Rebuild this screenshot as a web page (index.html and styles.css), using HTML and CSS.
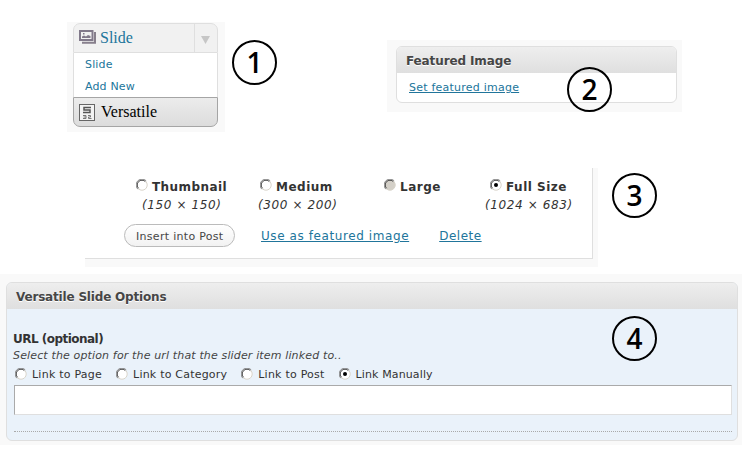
FILE: index.html
```
<!DOCTYPE html>
<html lang="en">
<head>
<meta charset="utf-8">
<title>Versatile slide guide</title>
<link rel="stylesheet" href="styles.css">
</head>
<body>
<svg class="defs" aria-hidden="true">
  <symbol id="ring" viewBox="0 0 12 12">
    <path d="M1.8 10.2A5.4 5.4 0 0 1 10.2 1.8" fill="none" stroke="#888"/>
    <path d="M2.6 9.4A4.6 4.6 0 0 1 9.4 2.6" fill="none" stroke="#404040"/>
    <path d="M9.7 2.3A5 5 0 0 1 2.3 9.7" fill="none" stroke="#d8d4ca"/>
  </symbol>
  <symbol id="radio" viewBox="0 0 12 12"><circle cx="6" cy="6" r="5.3" fill="#fff"/><use href="#ring"/></symbol>
  <symbol id="radio-off" viewBox="0 0 12 12"><circle cx="6" cy="6" r="5.3" fill="#d4d0c8"/><use href="#ring"/></symbol>
  <symbol id="radio-on" viewBox="0 0 12 12"><circle cx="6" cy="6" r="5.3" fill="#fff"/><use href="#ring"/><circle cx="6" cy="6" r="2" fill="#000"/></symbol>
</svg>
<main class="page">
  <section class="top">
    <div class="shot shot-menu">
      <nav class="menu">
        <div class="menu-head">
          <svg class="ico-slide" width="18" height="16" viewBox="0 0 18 16"><path d="M3 12.800H16V2" fill="none" stroke="#877f8c" stroke-width="2"/><rect x="0" y="0" width="14.500" height="11" fill="#81798a"/><rect x="2" y="2" width="10.500" height="7" fill="#f1f1f1"/><path d="M3 8V6.500l2-1 2 1 2-1.500 2.500 1V8z" fill="#81798a"/><rect x="4" y="3" width="1.500" height="1.500" fill="#81798a"/></svg>
          <a class="serif t-slide">Slide</a>
          <span class="toggle"><svg width="9" height="8" viewBox="0 0 9 8"><path d="M0 0H9L4.500 8z" fill="#c6c6c6"/></svg></span>
        </div>
        <div class="menu-list"><a class="t-sub1">Slide</a><a class="t-sub2">Add New</a></div>
        <div class="menu-foot">
          <svg class="ico-vers" width="16" height="17" viewBox="0 0 16 17"><rect x=".5" y=".5" width="15" height="16" fill="#f3f3f3" stroke="#666"/><path d="M12 3.500H5V6H11V8.500H4" fill="none" stroke="#555" stroke-width="1.500"/><path d="M4 11.500H7V14.500H4M4.500 13H7M9 11.500H11.500V13H9.500V14.500H12.500" fill="none" stroke="#777"/></svg>
          <span class="serif t-vers">Versatile</span>
        </div>
      </nav>
    </div>
    <b class="num num-1">1</b>
    <div class="shot shot-feat">
      <div class="box">
        <h3 class="box-title"><span class="t-feat">Featured Image</span></h3>
        <div class="feat-body"><a class="link t-set">Set featured image</a></div>
      </div>
      <b class="num num-2">2</b>
    </div>
  </section>
  <section class="middle">
    <div class="shot shot-sizes">
      <div class="sizes">
        <div class="size-row">
          <div class="size"><label><svg class="radio"><use href="#radio"/></svg><strong class="t-thumb">Thumbnail</strong></label><em class="t-d1">(150 × 150)</em></div>
          <div class="size"><label><svg class="radio"><use href="#radio"/></svg><strong class="t-med">Medium</strong></label><em class="t-d2">(300 × 200)</em></div>
          <div class="size"><label><svg class="radio"><use href="#radio-off"/></svg><strong class="t-large">Large</strong></label></div>
          <div class="size size-full"><label><svg class="radio"><use href="#radio-on"/></svg><strong class="t-full">Full Size</strong></label><em class="t-d3">(1024 × 683)</em></div>
        </div>
        <div class="actions"><span class="button"><span class="t-insert">Insert into Post</span></span><a class="link t-use">Use as featured image</a><a class="link t-del">Delete</a></div>
      </div>
    </div>
    <b class="num num-3">3</b>
  </section>
  <section class="shot shot-options">
    <div class="box box-blue">
      <h3 class="box-title"><span class="t-opt">Versatile Slide Options</span></h3>
      <div class="opt-body">
        <h4><span class="t-url">URL (optional)</span></h4>
        <p><em class="t-sel">Select the option for the url that the slider item linked to..</em></p>
        <div class="choices">
          <label><svg class="radio"><use href="#radio"/></svg><span class="t-l1">Link to Page</span></label>
          <label><svg class="radio"><use href="#radio"/></svg><span class="t-l2">Link to Category</span></label>
          <label><svg class="radio"><use href="#radio"/></svg><span class="t-l3">Link to Post</span></label>
          <label><svg class="radio"><use href="#radio-on"/></svg><span class="t-l4">Link Manually</span></label>
        </div>
        <div class="field"></div>
        <div class="rule"></div>
      </div>
    </div>
    <b class="num num-4">4</b>
  </section>
</main>
</body>
</html>
```
FILE: styles.css
```
* { box-sizing: border-box; }
body { margin: 0; background: #fff; color: #333; font: 11px/14px "DejaVu Sans", Verdana, sans-serif; }
h3, h4, p { margin: 0; }
a { color: #21759b; }
.defs { position: absolute; width: 0; height: 0; }
.page { width: 745px; height: 450px; overflow: hidden; }
.shot { background: #f9f9f9; }
.link { text-decoration: underline; }
.serif { font-family: "Liberation Serif", Georgia, serif; font-size: 16px; line-height: 18px; }
.radio { width: 12px; height: 12px; flex: none; display: block; }
span, a, strong, em { white-space: nowrap; }

.num { display: flex; width: 45px; height: 45px; align-items: center; justify-content: center; border: 2px solid #000; border-radius: 50%; background: #fff; color: #000; font: 600 28px/41px "Open Sans", sans-serif; flex: none; }

.top { display: flex; align-items: flex-start; height: 168px; padding: 22px 0 0 67px; }
.shot-menu { width: 158px; height: 110px; padding: 1px 7px 0 6px; }
.menu { height: 104px; border-radius: 7px; background: #fff; }
.menu-head { display: flex; height: 30px; border: 1px solid #dfdfdf; border-radius: 7px 7px 0 0; background: #f1f1f1; padding-left: 5px; }
.ico-slide { margin: 6px 3px 0 0; }
.t-slide { margin-top: 5px; }
.toggle { margin-left: auto; width: 23px; border-left: 1px solid #dfdfdf; padding: 12px 0 0 6px; line-height: 0; }
.menu-list { display: flex; flex-direction: column; height: 44px; padding: 1px 0 0 11px; border: solid #dfdfdf; border-width: 0 1px; line-height: 22px; }
.t-sub1, .t-sub2 { letter-spacing: .15px; }
.menu-foot { display: flex; height: 30px; border: 1px solid #a5a5a5; border-radius: 0 0 7px 7px; background: linear-gradient(#ececec, #dcdcdc); padding-left: 5px; color: #000; }
.ico-vers { margin: 6px 6px 0 0; }
.t-vers { margin-top: 5px; }
.num-1 { margin: 18px 0 0 7px; }

.shot-feat { position: relative; width: 295px; height: 72px; margin: 18px 0 0 110px; padding: 6px 5px 0 9px; }
.box { border: 1px solid #dfdfdf; border-radius: 6px; background: #fff; overflow: hidden; }
.box-title { height: 26px; background: linear-gradient(#eee, #dfdfdf); padding: 7px 0 0 9px; font-size: 12px; line-height: 14px; color: #464646; text-shadow: 0 1px 0 #fff; }
.shot-feat .box { height: 57px; }
.feat-body { padding: 8px 0 0 12px; }
.t-feat { letter-spacing: -.12px; }
.t-set { letter-spacing: .23px; }
.num-2 { position: absolute; left: 180px; top: 27px; background: none; }

.middle { display: flex; height: 106px; padding-left: 85px; }
.shot-sizes { width: 513px; height: 99px; padding-right: 5px; }
.sizes { height: 91px; border: solid #dfdfdf; border-width: 0 1px 1px 0; background: #fff; }
.size-row { display: flex; height: 56px; padding: 11px 0 0 51px; font-size: 12px; }
.size { display: flex; flex: none; flex-direction: column; width: 124px; }
.size label { display: flex; gap: 4px; }
.size strong { margin-top: 1px; letter-spacing: .5px; }
.size em { margin-top: 4px; letter-spacing: .6px; }
.size .t-thumb { letter-spacing: .42px; }
.t-d1 { padding-left: 6px; }
.t-d2 { margin-left: -2px; }
.size-full { width: 90px; margin-left: -23px; }
.size-full label { padding-left: 5px; }
.actions { display: flex; align-items: flex-start; padding-left: 39px; font-size: 12px; }
.button { width: 111px; height: 23px; border: 1px solid #bbb; border-radius: 12px; background: linear-gradient(#fff, #f2f2f2); padding: 5px 0 0 11px; font-size: 11px; line-height: 14px; color: #464646; }
.t-insert { display: block; letter-spacing: .3px; }
.t-use { margin: 5px 0 0 26px; letter-spacing: .59px; }
.t-del { margin: 5px 0 0 30px; letter-spacing: .5px; }
.num-3 { margin: 5px 0 0 14px; }

.shot-options { position: relative; width: 742px; height: 171px; padding: 8px 4px 0 6px; }
.box-blue { height: 159px; background: #eaf2fa; }
.opt-body { padding: 23px 5px 0 6px; }
h4 { font-size: 12px; line-height: 15px; }
.t-opt { letter-spacing: -.18px; }
.t-url { letter-spacing: -.52px; }
p { padding-top: 2px; }
.t-sel { color: #444; letter-spacing: .145px; }
.choices { display: flex; gap: 14px; height: 22px; padding: 5px 0 0 2px; }
.choices label { display: flex; gap: 5px; }
.t-l1 { letter-spacing: .24px; }
.t-l2 { letter-spacing: .21px; }
.t-l3 { letter-spacing: .23px; }
.t-l4 { letter-spacing: .12px; }
.field { height: 30px; margin-left: 1px; border: 1px solid #dfdfdf; border-top-color: #aaa; border-left-color: #aaa; background: #fff; }
.rule { margin: 16px 0 0 1px; border-top: 1px dotted #aaa; }
.num-4 { position: absolute; left: 612px; top: 42px; background: none; }
```
